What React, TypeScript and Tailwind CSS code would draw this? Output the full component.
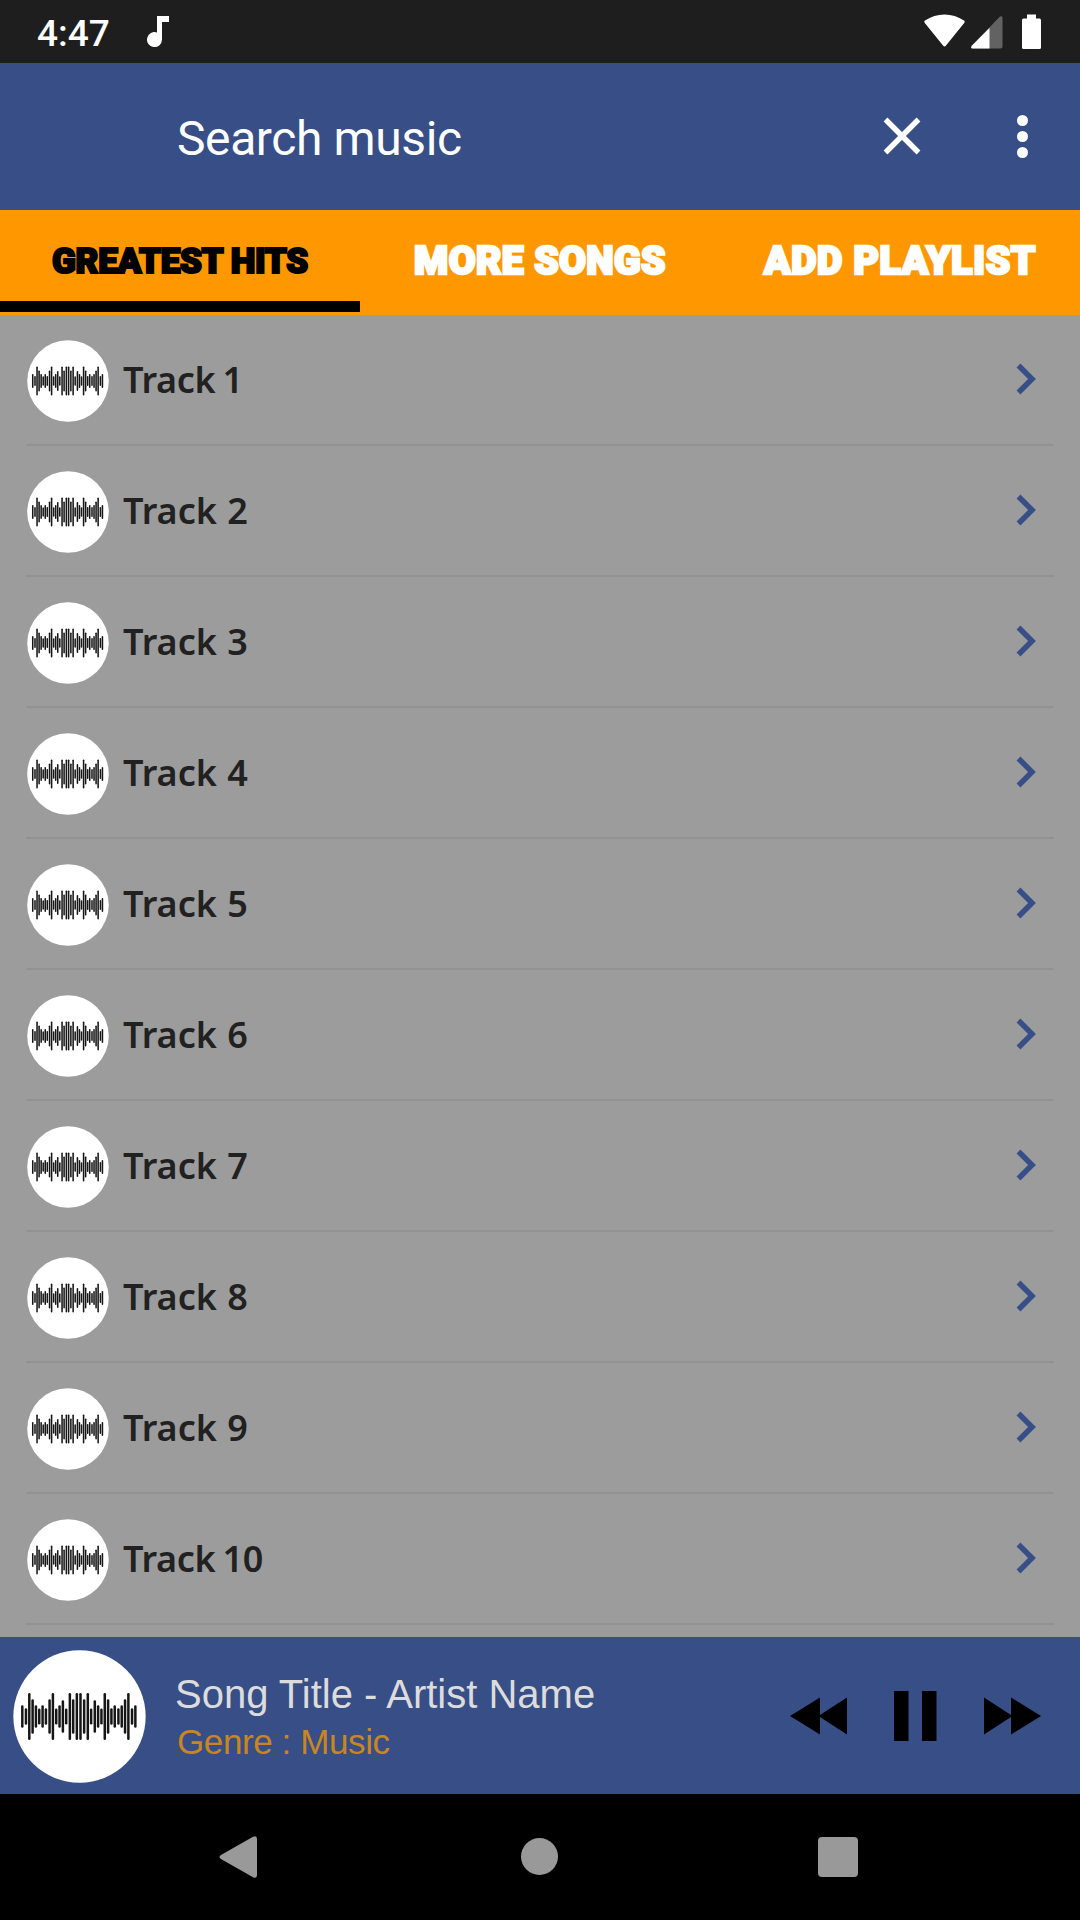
import { useState } from 'react';
import clsx from 'clsx';

interface Tab {
  id: string;
  label: string;
  textClass: string;
}

const tabs: Tab[] = [
  { id: 'hits', label: 'GREATEST HITS', textClass: 'text-[35px] [-webkit-text-stroke:2.2px] tracking-[-0.3px]' },
  { id: 'more', label: 'MORE SONGS', textClass: 'text-[39px] [-webkit-text-stroke:2.6px] tracking-[0.4px]' },
  { id: 'playlist', label: 'ADD PLAYLIST', textClass: 'text-[39px] [-webkit-text-stroke:2.6px] tracking-[0.7px]' },
];

const tracks = Array.from({ length: 10 }, (_, i) => `Track ${i + 1}`);

// [x, half height] of every bar
const waveBars = [
  [67, 33], [78, 24], [88, 70], [98, 51], [108, 33], [118, 23], [128, 33], [138, 24], [149, 51],
  [159, 70], [169, 23], [179, 33], [189, 48], [199, 23], [210, 70], [220, 51], [231, 70], [242, 70],
  [253, 51], [264, 70], [274, 23], [285, 48], [295, 33], [305, 23], [315, 70], [325, 51], [335, 24],
  [345, 33], [356, 24], [366, 33], [376, 51], [386, 70], [397, 24], [407, 33],
];

function WaveIcon({ className }: { className: string }) {
  return (
    <svg className={className} viewBox="39 43 400 400">
      <circle cx="239" cy="243" r="199" fill="#fff" />
      <g stroke="#161616" strokeWidth="7.5" strokeLinecap="round">
        {waveBars.map(([x, h]) => (
          <line key={x} x1={x} x2={x} y1={246 - h} y2={240 + h} />
        ))}
      </g>
    </svg>
  );
}

function StatusBar() {
  return (
    <div className="flex h-[63px] shrink-0 items-center bg-[#1e1e1e] pl-[37px] text-white">
      <span className="w-[110px] pt-[4px] font-['Roboto',sans-serif] text-[37px] leading-none font-medium">4:47</span>
      <svg className="h-[31px] w-[22px]" viewBox="0 0 22 31" fill="currentColor">
        <path d="M10 0h12v6h-7v17.5a7.5 7.5 0 1 1-5-7z" />
      </svg>
      <svg className="mr-[38px] ml-auto h-[36px] w-[118px]" viewBox="0 0 118 36" fill="currentColor">
        <path d="M.8 9Q-.3 7.500 1 6.500Q10 .5 20.500 .5T40 6.500Q41.300 7.500 40.200 9L22 31.500Q20.500 33.500 19 31.500Z" />
        <path d="M76 2.500Q78.500 1.500 78.500 4V32.500Q78.500 34.500 76.500 34.500H48.500Q46 34 48 31.500Z" fill="#626262" />
        <path d="M65.500 14V34.500H48.500Q46 34 48 31.500Z" />
        <path d="M103 .5h9v4h3.500q1.500 0 1.500 1.500v27.500q0 1.500-1.500 1.500h-16q-1.500 0-1.500-1.500v-27.500q0-1.500 1.500-1.500h3.500z" />
      </svg>
    </div>
  );
}

function SearchHeader() {
  return (
    <header className="flex h-[147px] shrink-0 items-center bg-[#374e86] pl-[177px] text-white">
      <span className="pt-[4px] font-['Roboto',sans-serif] text-[48px] leading-none tracking-[-0.4px] whitespace-nowrap">
        Search music
      </span>
      <button className="mr-[96px] mb-[2px] ml-auto">
        <svg className="h-[38px] w-[38px]" viewBox="0 0 38 38" stroke="currentColor" strokeWidth="5.400">
          <path d="M2.500 2.500l33 33M35.500 2.500l-33 33" />
        </svg>
      </button>
      <button className="mr-[52px] flex flex-col gap-[5px]">
        <span className="size-[11px] rounded-full bg-white" />
        <span className="size-[11px] rounded-full bg-white" />
        <span className="size-[11px] rounded-full bg-white" />
      </button>
    </header>
  );
}

export default function App() {
  const [activeTab, setActiveTab] = useState('hits');

  return (
    <div className="flex h-[1920px] w-[1080px] flex-col overflow-hidden bg-[#9c9c9c]">
      <StatusBar />
      <SearchHeader />

      {/* Tabs */}
      <nav className="grid h-[105px] shrink-0 grid-cols-3 bg-[#ff9800]">
        {tabs.map(tab => (
          <button
            key={tab.id}
            onClick={() => setActiveTab(tab.id)}
            className={clsx(
              'mb-[3px] flex items-center justify-center border-b-[11px] pt-[12px]',
              activeTab === tab.id ? 'border-black text-black' : 'border-transparent text-white',
            )}
          >
            <span className={clsx("font-['Roboto',sans-serif] leading-none font-black whitespace-nowrap", tab.textClass)}>
              {tab.label}
            </span>
          </button>
        ))}
      </nav>

      {/* Track list */}
      <ul className="flex-1 overflow-hidden px-[26px]">
        {tracks.map(track => (
          <li key={track} className="flex h-[131px] items-center border-b-2 border-[#929292]">
            <WaveIcon className="mt-[2px] ml-px size-[82px]" />
            <span
              className={clsx(
                "ml-[14px] font-['Noto_Sans',sans-serif] text-[36px] leading-none font-semibold text-[#212121]",
                track.includes('1') ? 'tracking-[-0.3px] [word-spacing:-2px]' : '[word-spacing:1px]',
              )}
            >
              {track}
            </span>
            <svg className="mr-[18px] mb-[2px] ml-auto h-[32px] w-[20px]" viewBox="0 0 20 32" fill="none" stroke="#374e86" strokeWidth="5.500">
              <path d="M2.500 2.500l13.500 13.500l-13.500 13.500" />
            </svg>
          </li>
        ))}
      </ul>

      {/* Player */}
      <footer className="flex h-[157px] shrink-0 items-center bg-[#374e86] pl-[13px]">
        <WaveIcon className="mt-[2px] size-[133px]" />
        <div className="ml-[29px] flex flex-col pt-[5px] font-['Liberation_Sans',sans-serif] whitespace-nowrap">
          <span className="text-[40px] leading-[47px] text-[#dcdcdc]">Song Title - Artist Name</span>
          <span className="pl-[2px] text-[35px] leading-[48px] tracking-[-0.4px] text-[#c9861f]">Genre : Music</span>
        </div>
        <div className="mr-[39px] ml-auto flex items-center text-black">
          <svg className="h-[38px] w-[57px]" viewBox="0 0 57 38" fill="currentColor">
            <path d="M0 19L30 .5V18L57 .5V37.500L30 20V37.500Z" />
          </svg>
          <svg className="ml-[47px] h-[50px] w-[43px]" viewBox="0 0 43 50" fill="currentColor">
            <path d="M0 0h14.500v50H0zM28 0h14.500v50H28z" />
          </svg>
          <svg className="ml-[47px] h-[38px] w-[57px]" viewBox="0 0 57 38" fill="currentColor">
            <path d="M57 19L27 .5V18L0 .5V37.500L27 20V37.500Z" />
          </svg>
        </div>
      </footer>

      {/* System navigation */}
      <div className="flex h-[126px] shrink-0 items-center bg-black pb-px pl-[219px] text-[#999999]">
        <svg className="h-[42px] w-[38px]" viewBox="0 0 38 42" fill="currentColor">
          <path d="M34 .8Q38 -1 38 3V39Q38 43 34 41.200L2 23Q-1 21 2 19Z" />
        </svg>
        <span className="ml-[264px] size-[37px] rounded-full bg-[#999999]" />
        <span className="ml-[260px] size-[40px] rounded-[4px] bg-[#999999]" />
      </div>
    </div>
  );
}
